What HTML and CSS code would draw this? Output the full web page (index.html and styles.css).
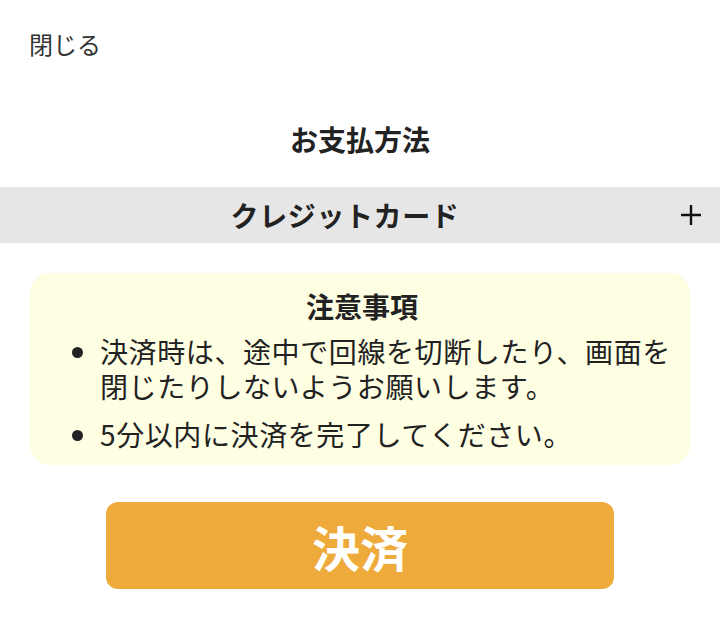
FILE: index.html
```html
<!DOCTYPE html>
<html lang="ja">
<head>
    <meta charset="utf-8">
    <title>お支払方法</title>
    <link rel="stylesheet" href="styles.css">
</head>
<body>

<div class="page">
    <div class="top-bar">
        <a class="close-link" href="#">閉じる</a>
    </div>

    <h1 class="page-title">お支払方法</h1>

    <div class="method-row">
        <span class="method-name">クレジットカード</span>
        <span class="method-toggle">
            <svg width="22" height="22" viewBox="0 0 22 22">
                <path d="M11 1 V21 M1 11 H21" stroke="#111" stroke-width="2.4" fill="none"/>
            </svg>
        </span>
    </div>

    <div class="notice">
        <h2 class="notice-title">注意事項</h2>
        <ul class="notice-list">
            <li>決済時は、途中で回線を切断したり、画面を閉じたりしないようお願いします。</li>
            <li>5分以内に決済を完了してください。</li>
        </ul>
    </div>

    <div class="actions">
        <button class="pay-button">決済</button>
    </div>
</div>

</body>
</html>
```

FILE: styles.css
```css
body {
    font-family: "Noto Sans CJK JP", "Noto Sans", sans-serif;
    background: #fff;
    color: #222;
    margin: 0;
}

.page {
    width: 720px;
}

.top-bar {
    padding: 26px 29px 0;
    height: 40px;
}

.close-link {
    font-size: 24px;
    line-height: 36px;
    color: #333;
    text-decoration: none;
}

.page-title {
    margin: 53px 0 0;
    font-size: 28px;
    line-height: 40px;
    font-weight: bold;
    text-align: center;
    color: #222;
}

.method-row {
    display: flex;
    align-items: center;
    margin-top: 28px;
    padding-left: 10px;
    height: 56px;
    background-color: #e6e6e6;
}

.method-name {
    flex: 1;
    text-align: center;
    font-size: 28px;
    letter-spacing: 0.6px;
    font-weight: bold;
    color: #222;
}

.method-toggle {
    width: 22px;
    display: flex;
    margin-right: 18px;
}

.notice {
    margin: 30px 30px 0;
    padding: 15px 16px 13px 20px;
    background-color: #fefee2;
    border-radius: 20px;
}

.notice-title {
    margin: 0;
    font-size: 28px;
    line-height: 36px;
    font-weight: bold;
    text-align: center;
}

.notice-list {
    margin: 10px 0 0;
    padding-left: 50px;
    font-size: 28px;
    letter-spacing: 0.6px;
    line-height: 35px;
}

.notice-list li {
    margin-bottom: 13px;
}

.notice-list li:last-child {
    margin-bottom: 0;
}

.actions {
    display: flex;
    justify-content: center;
    margin-top: 37px;
}

.pay-button {
    width: 508px;
    height: 87px;
    border: none;
    border-radius: 12px;
    background-color: #efaa3c;
    color: #fff;
    font-family: inherit;
    font-size: 48px;
    font-weight: bold;
    cursor: pointer;
}
```
